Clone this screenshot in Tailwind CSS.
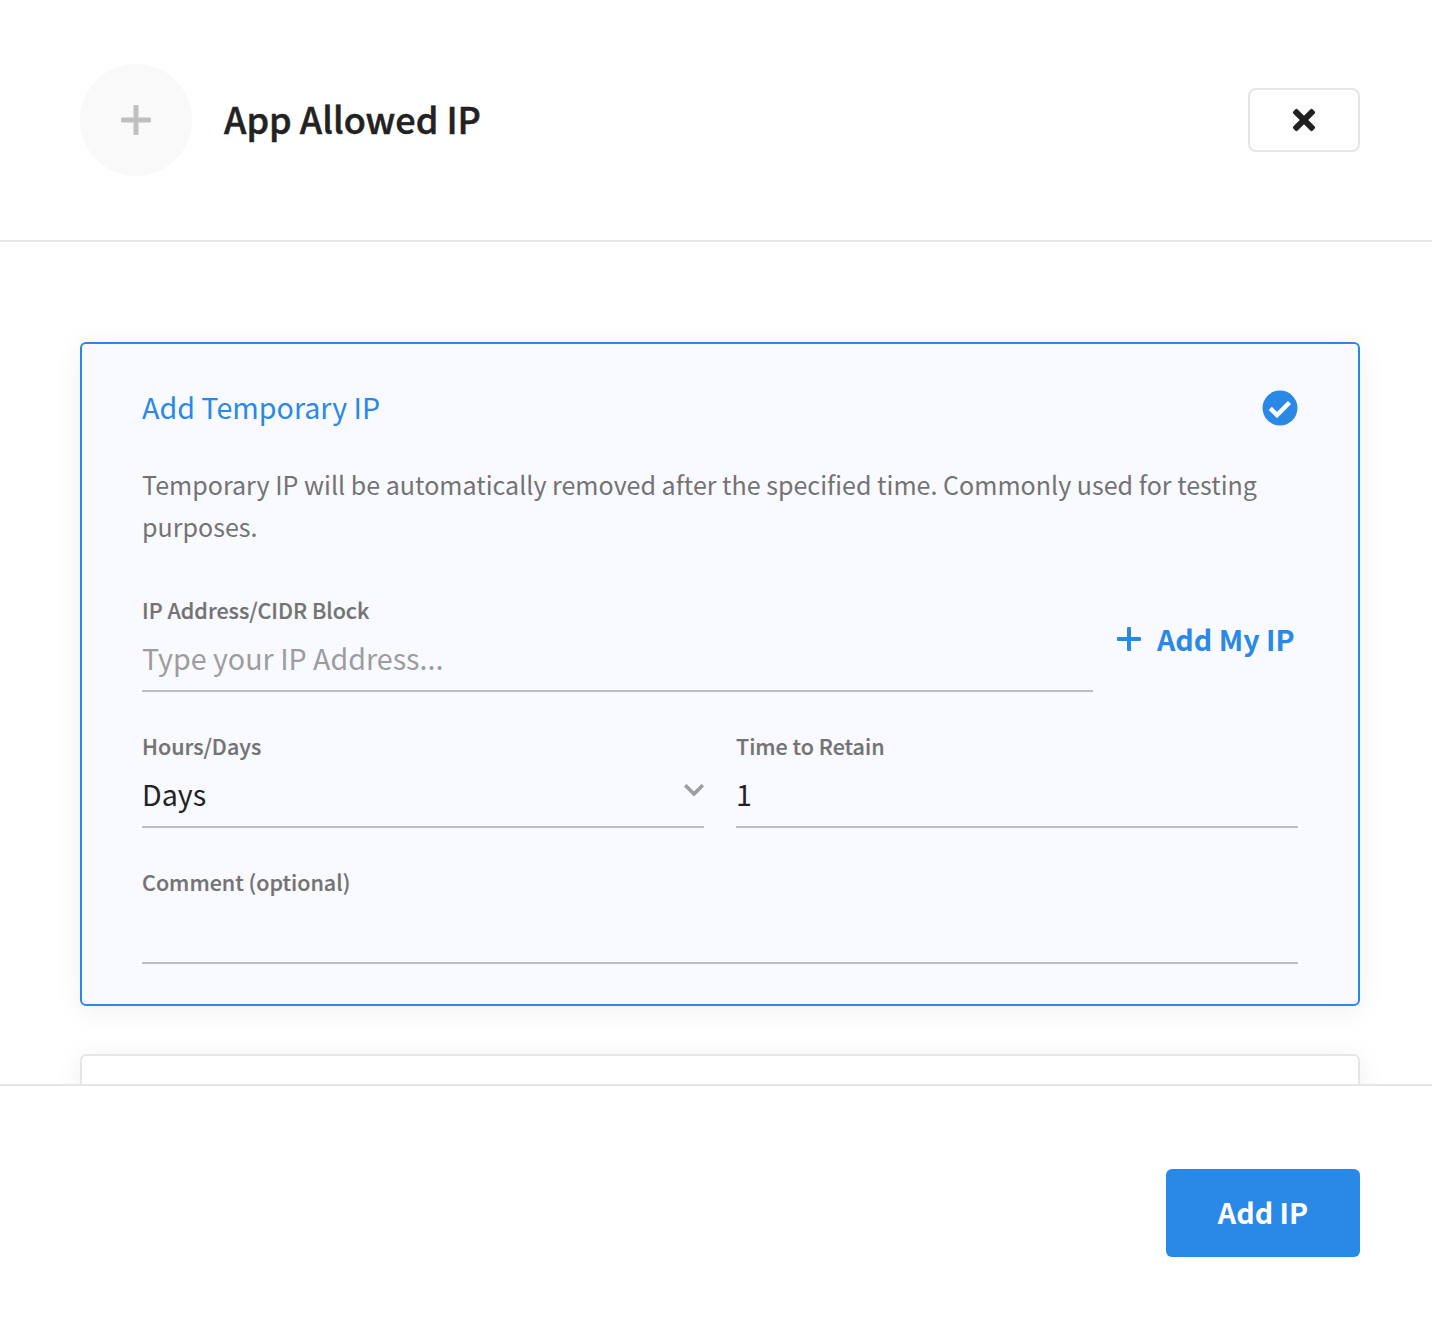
<!DOCTYPE html>
<html lang="en">
<head>
<meta charset="utf-8">
<title>App Allowed IP</title>
<script src="https://cdn.jsdelivr.net/npm/@tailwindcss/browser@4"></script>
</head>
<body class="bg-white font-['Noto_Sans_CJK_SC',sans-serif] text-[#222]">
<div class="flex h-[1332px] w-[1432px] flex-col overflow-hidden">
  <header class="flex h-[242px] shrink-0 items-center border-b-2 border-[#e6e6e6] pr-[72px] pl-20">
    <div class="flex size-28 items-center justify-center rounded-full bg-[#f9f9f9]">
      <svg class="size-[30px]" viewBox="0 0 30 30" fill="#c0c0c0"><rect x="12.500" width="5" height="30" rx="1"/><rect y="12.500" width="30" height="5" rx="1"/></svg>
    </div>
    <h1 class="ml-8 pb-1 text-[36px] leading-[56px] font-medium whitespace-nowrap [-webkit-text-stroke:0.5px_#222]">App Allowed IP</h1>
    <button class="ml-auto flex h-16 w-28 items-center justify-center rounded-lg border-2 border-[#e6e6e6]" aria-label="Close">
      <svg class="size-6" viewBox="0 0 24 24" fill="#222"><g transform="rotate(45 12 12)"><rect x="-1.700" y="9" width="27.400" height="6" rx="1.800"/><rect x="9" y="-1.700" width="6" height="27.400" rx="1.800"/></g></svg>
    </button>
  </header>
  <main class="h-[842px] shrink-0 overflow-hidden px-[72px] pt-[100px] pl-20">
    <section class="h-[664px] rounded-md border-2 border-[#2a88e6] bg-[#f9faff] px-[60px] pt-10 shadow-[0_4px_28px_rgba(0,0,0,0.065)]">
      <div class="flex h-12 items-center justify-between">
        <h2 class="pb-0.5 text-[28.65px] leading-[46px] text-[#2a88e6]">Add Temporary IP</h2>
        <svg class="size-9" viewBox="0 0 36 36"><circle cx="18" cy="18" r="17.500" fill="#2a88e6"/><path d="M8.300 18.300L15 25L27.500 12.500" fill="none" stroke="#fff" stroke-width="4.500"/></svg>
      </div>
      <p class="mt-[31px] text-[25.05px] leading-[42px] text-[#737373]">Temporary IP will be automatically removed after the specified time. Commonly used for testing purposes.</p>
      <div class="mt-[43px] flex">
        <div class="h-[102px] w-[951px] shrink-0 border-b-2 border-[#bfbfbf]">
          <div class="text-[21.5px] leading-[40px] font-medium text-[#737373] [-webkit-text-stroke:0.2px_#737373]">IP Address/CIDR Block</div>
          <div class="text-[28.65px] leading-[56px] text-[#9d9d9d]">Type your IP Address...</div>
        </div>
        <div class="mt-[25px] ml-6 flex h-12 items-center text-[#2a88e6]">
          <svg class="size-6" viewBox="0 0 24 24" fill="currentColor"><rect x="10" width="4" height="24" rx="1"/><rect y="10" width="24" height="4" rx="1"/></svg>
          <span class="ml-4 text-[28.65px] leading-[48px] font-bold whitespace-nowrap">Add My IP</span>
        </div>
      </div>
      <div class="mt-[34px] flex gap-8">
        <div class="h-[102px] flex-1 border-b-2 border-[#bfbfbf]">
          <div class="text-[21.5px] leading-[40px] font-medium text-[#737373] [-webkit-text-stroke:0.2px_#737373]">Hours/Days</div>
          <div class="flex items-start justify-between text-[28.65px] leading-[56px]">
            <span>Days</span>
            <svg class="mt-[18px] h-3 w-5" viewBox="0 0 20 12" fill="none" stroke="#9d9d9d" stroke-width="3.600"><path d="M1.200 1.200L10 10l8.800-8.800"/></svg>
          </div>
        </div>
        <div class="h-[102px] flex-1 border-b-2 border-[#bfbfbf]">
          <div class="text-[21.5px] leading-[40px] font-medium text-[#737373] [-webkit-text-stroke:0.2px_#737373]">Time to Retain</div>
          <div class="text-[28.65px] leading-[56px]">1</div>
        </div>
      </div>
      <div class="mt-[34px] h-[102px] border-b-2 border-[#bfbfbf] text-[21.5px] leading-[40px] font-medium text-[#737373] [-webkit-text-stroke:0.2px_#737373]">Comment (optional)</div>
    </section>
    <section class="mt-12 h-40 rounded-md border-2 border-[#e6e6e6] bg-white shadow-[0_4px_28px_rgba(0,0,0,0.065)]"></section>
  </main>
  <footer class="flex flex-1 items-start justify-end border-t-2 border-[#e6e6e6] pt-[83px] pr-[72px]">
    <button class="h-[88px] w-[194px] rounded-md bg-[#2a88e6] pb-0.5 text-[28.65px] leading-[48px] font-bold text-white">Add IP</button>
  </footer>
</div>
</body>
</html>
